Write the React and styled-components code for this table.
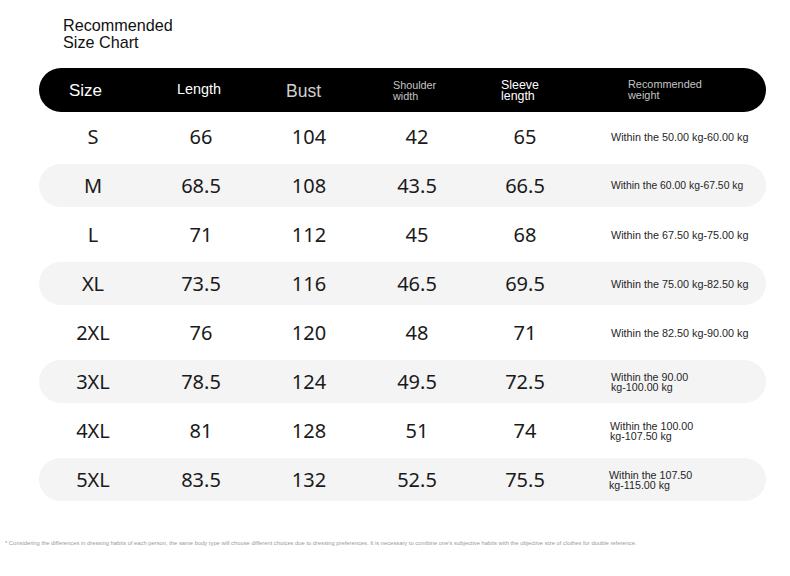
import React from 'react';
import styled, { createGlobalStyle } from 'styled-components';

const GlobalStyle = createGlobalStyle`
  html, body {
    margin: 0;
    padding: 0;
    background: #fff;
  }
`;

const Page = styled.div`
  width: 790px;
  height: 576px;
  box-sizing: border-box;
  padding: 17px 24px 0 39px;
  background: #fff;
  font-family: 'Liberation Sans', Arial, sans-serif;
  color: #111;
  position: relative;
`;

const Title = styled.h1`
  margin: 0 0 17px 24px;
  font-size: 16.2px;
  font-weight: 400;
  line-height: 17px;
  color: #111;
`;

const Table = styled.div`
  display: flex;
  flex-direction: column;
  gap: 6px;
  width: 727px;
`;

const Grid = styled.div`
  display: grid;
  grid-template-columns: 108px 108px 108px 108px 108px 1fr;
  align-items: center;
  height: 43px;
  border-radius: 22px;
  background: ${(props) => (props.$shaded ? '#f4f4f4' : 'transparent')};
`;

const HeaderBar = styled(Grid)`
  height: 44px;
  margin-bottom: -3px;
  background: #000;
`;

const HeadCell = styled.div`
  padding-left: ${(props) => props.$pad || 30}px;
  font-size: ${(props) => props.$size}px;
  line-height: ${(props) => props.$lh || 1}px;
  color: ${(props) => props.$color || '#fff'};
  white-space: pre-line;
  margin-top: ${(props) => props.$dy || 0}px;
`;

const Num = styled.div`
  text-align: center;
  font-family: 'Noto Sans', 'Open Sans', sans-serif;
  font-size: 20px;
  color: #1a1a1a;
`;

const Weight = styled.div`
  padding-left: ${(props) => props.$pad}px;
  font-size: ${(props) => props.$size}px;
  line-height: 10px;
  color: #1f1f1f;
  white-space: pre-line;
`;

const Note = styled.p`
  position: absolute;
  left: 5px;
  top: 540px;
  margin: 0;
  font-size: 5.8px;
  color: #9a9a9a;
  white-space: nowrap;
`;

const rows = [
  ['S', '66', '104', '42', '65', 'Within the 50.00 kg-60.00 kg', 10.8, 32],
  ['M', '68.5', '108', '43.5', '66.5', 'Within the 60.00 kg-67.50 kg', 10.4, 32],
  ['L', '71', '112', '45', '68', 'Within the 67.50 kg-75.00 kg', 10.8, 32],
  ['XL', '73.5', '116', '46.5', '69.5', 'Within the 75.00 kg-82.50 kg', 10.8, 32],
  ['2XL', '76', '120', '48', '71', 'Within the 82.50 kg-90.00 kg', 10.8, 32],
  ['3XL', '78.5', '124', '49.5', '72.5', 'Within the 90.00\nkg-100.00 kg', 10.7, 32],
  ['4XL', '81', '128', '51', '74', 'Within the 100.00\nkg-107.50 kg', 10.7, 31],
  ['5XL', '83.5', '132', '52.5', '75.5', 'Within the 107.50\nkg-115.00 kg', 10.7, 30],
];

const App = () => {
  return (
    <Page>
      <GlobalStyle />
      <Title>
        Recommended
        <br />
        Size Chart
      </Title>
      <Table>
        <HeaderBar>
          <HeadCell $size={17} $lh={17}>Size</HeadCell>
          <HeadCell $size={14.4} $lh={14} $dy={-3}>Length</HeadCell>
          <HeadCell $size={17.5} $lh={18} $pad={31} $dy={1} $color="#d0d0d0">Bust</HeadCell>
          <HeadCell $size={10.8} $lh={11} $dy={1} $color="#c4c4c4">{'Shoulder\nwidth'}</HeadCell>
          <HeadCell $size={12.4} $lh={11} $dy={1}>{'Sleeve\nlength'}</HeadCell>
          <HeadCell $size={10.9} $lh={11} $pad={49} $color="#c4c4c4">
            {'Recommended\nweight'}
          </HeadCell>
        </HeaderBar>
        {rows.map((r, i) => (
          <Grid key={r[0]} $shaded={i % 2 === 1}>
            <Num>{r[0]}</Num>
            <Num>{r[1]}</Num>
            <Num>{r[2]}</Num>
            <Num>{r[3]}</Num>
            <Num>{r[4]}</Num>
            <Weight $size={r[6]} $pad={r[7]}>{r[5]}</Weight>
          </Grid>
        ))}
      </Table>
      <Note>
        * Considering the differences in dressing habits of each person, the same body type will choose different choices due to dressing preferences. It is necessary to combine one's subjective habits with the objective size of clothes for double reference.
      </Note>
    </Page>
  );
};

export default App;
